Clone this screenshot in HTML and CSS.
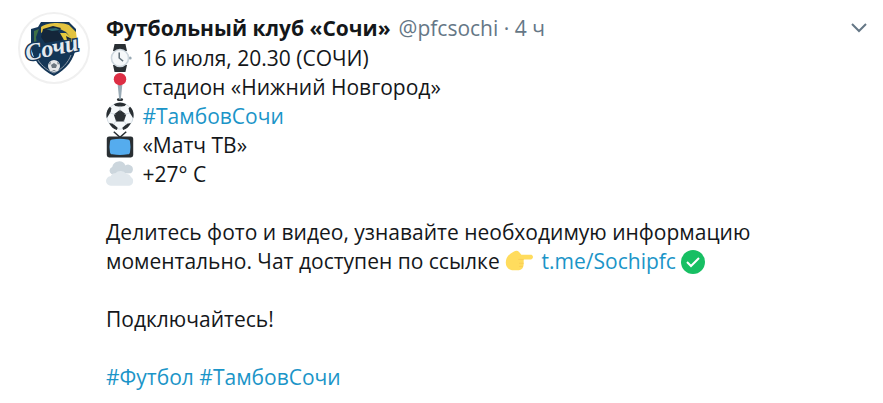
FILE: index.html
```html
<!DOCTYPE html>
<html lang="ru">
<head>
    <meta charset="UTF-8">
    <meta name="viewport" content="width=device-width, initial-scale=1.0">
    <title>Футбольный клуб «Сочи»</title>
    <link rel="stylesheet" href="styles.css">
</head>

<body>
    <article class="tweet">
        <a class="avatar" href="#" aria-label="Футбольный клуб «Сочи»">
            <svg viewBox="0 0 72 72">
                <circle cx="36" cy="36" r="35" fill="#fff" stroke="#f0f0f0" stroke-width="2"/>
                <path d="M13 17L20 15L23 10H51L58 17V34C57 47 48 58 36 64C23 58 14 47 13 34Z" fill="#143657"/>
                <path d="M16 19L21 17L18 25L19 34H16Z" fill="#3f7046"/>
                <path d="M23 15C29 10 45 10 51 13L58 20L59 28L53 26L48 20L40 16H30L23 21Z" fill="#e2c340"/>
                <path d="M25 17L35 14L43 16L40 20L47 24L44 28L27 31L23 25Z" fill="#14263a"/>
                <path d="M28 17L38 16L42 18L34 19Z" fill="#2d6a72"/>
                <path d="M42 21L48 21L56 28L52 31L46 28Z" fill="#e4c93d"/>
                <path d="M48 24L54 27L49 28Z" fill="#14263a"/>
                <path d="M18 45C22 52 28 58 36 61C44 57 50 51 53 43" fill="none" stroke="#8d9aa8" stroke-width="1"/>
                <text class="logo-text" x="9" y="49" transform="rotate(-12 9 49)">Сочи</text>
                <circle cx="36" cy="54" r="6" fill="#e6e8ea"/>
                <path d="M36 51L39 53L38 56H34L33 53ZM31 51L33 50L32 53ZM41 51L39 50L40 53ZM34 59L36 58L38 59Z" fill="#6c7780"/>
            </svg>
        </a>
        <div class="content">
            <header class="tweet-header">
                <a class="name" href="#">Футбольный клуб «Сочи»</a>
                <span class="meta">@pfcsochi · 4 ч</span>
                <button class="more" type="button" aria-label="Ещё">
                    <svg viewBox="0 0 16 10"><path d="M1 1L8 8L15 1" fill="none" stroke="#657786" stroke-width="2"/></svg>
                </button>
            </header>
            <div class="text">
                <p>
                    <svg class="emoji" viewBox="0 0 36 36">
                        <path d="M11 0H25L27 9H9ZM9 27H27L25 36H11Z" fill="#292f33"/>
                        <circle cx="31" cy="18" r="2" fill="#99aab5"/>
                        <circle cx="18" cy="18" r="12" fill="#ccd6dd"/>
                        <circle cx="18" cy="18" r="10" fill="#f5f8fa"/>
                        <path d="M17 11V18L22 22" fill="none" stroke="#66757f" stroke-width="2"/>
                    </svg>
                    16 июля, 20.30 (СОЧИ)
                </p>
                <p>
                    <svg class="emoji" viewBox="0 0 36 36">
                        <ellipse cx="18" cy="34" rx="4" ry="2" fill="#292f33"/>
                        <path d="M15 15H21L19 34H17Z" fill="#99aab5"/>
                        <circle cx="18" cy="8" r="8" fill="#dd2e44"/>
                    </svg>
                    стадион «Нижний Новгород»
                </p>
                <p>
                    <svg class="emoji" viewBox="0 0 36 36">
                        <circle cx="18" cy="18" r="17" fill="#f5f8fa" stroke="#ccd6dd"/>
                        <path d="M18 10L26 16L23 25H13L10 16ZM10 3Q18 -2 26 3L24 5L18 6L12 5ZM1 21Q-1 12 5 6L7 8L6 13ZM35 21Q37 12 31 6L29 8L30 13ZM4 27L9 28L15 33L14 36Q7 34 4 27ZM32 27L27 28L21 33L22 36Q29 34 32 27Z" fill="#292f33"/>
                        <path d="M18 5V12M5 14L12 16M31 14L24 16M13 24L10 29M23 24L26 29" stroke="#ccd6dd"/>
                    </svg>
                    <a href="#">#ТамбовСочи</a>
                </p>
                <p>
                    <svg class="emoji" viewBox="0 0 36 36">
                        <path d="M10 1L18 8L26 1" fill="none" stroke="#292f33" stroke-width="2"/>
                        <rect x="1" y="7" width="34" height="27" rx="3" fill="#292f33"/>
                        <path d="M8 11Q18 9 28 11Q31 11 31 15Q32 20 31 26Q31 30 28 30Q18 32 8 30Q5 30 5 26Q4 20 5 15Q5 11 8 11Z" fill="#55acee"/>
                    </svg>
                    «Матч ТВ»
                </p>
                <p>
                    <svg class="emoji" viewBox="0 0 36 36">
                        <path d="M7 18A5 5 0 0 1 8 9A9 9 0 0 1 25 7A6 6 0 0 1 32 17Z" fill="#ccd6dd"/>
                        <path d="M6 33A6 6 0 0 1 6 21A6 6 0 0 1 12 17A9 9 0 0 1 26 18A6 6 0 0 1 32 22A6 6 0 0 1 30 33Z" fill="#e1e8ed"/>
                    </svg>
                    +27° C
                </p>
                <p class="block">
                    Делитесь фото и видео, узнавайте необходимую информацию моментально. Чат доступен по ссылке
                    <svg class="emoji" viewBox="0 0 36 36">
                        <path d="M11 6C17 3 18 7 21 10H33C37 10 37 16 33 16H24V22Q24 29 18 30H9Q1 28 1 20Q1 11 11 6Z" fill="#ffdc5d"/>
                        <path d="M17 16H24M18 21H24M18 25H23" stroke="#f9ca55"/>
                    </svg>
                    <a href="#">t.me/Sochipfc</a>
                    <svg class="check" viewBox="0 0 24 24">
                        <circle cx="12" cy="12" r="12" fill="#17bf63"/>
                        <path d="M6 12L10 16L18 8" fill="none" stroke="#fff" stroke-width="2"/>
                    </svg>
                </p>
                <p class="block">Подключайтесь!</p>
                <p class="block"><a href="#">#Футбол</a> <a href="#">#ТамбовСочи</a></p>
            </div>
        </div>
    </article>
</body>
</html>
```

FILE: styles.css
```css
body {
    margin: 0;
    background-color: #fff;
    color: #14171a;
    font-family: "Open Sans", "Noto Sans", sans-serif;
    font-size: 21px;
    line-height: 29px;
}

a {
    color: #1b95c8;
    text-decoration: none;
}

/* Tweet */
.tweet {
    display: flex;
    gap: 16px;
    padding: 12px 16px 0 18px;
}

.avatar {
    flex: none;
    width: 72px;
    height: 72px;
}

.avatar svg {
    display: block;
}

.logo-text {
    font-family: "Liberation Serif", serif;
    font-size: 24px;
    font-style: italic;
    font-weight: bold;
    fill: #e4eaf0;
    stroke: #143657;
    stroke-width: 3px;
    paint-order: stroke;
}

.content {
    flex: 1;
    min-width: 0;
}

/* Header */
.tweet-header {
    display: flex;
    align-items: center;
    gap: 8px;
    height: 32px;
}

.name {
    color: #14171a;
    font-weight: bold;
}

.meta {
    color: #657786;
}

.more {
    display: flex;
    margin-left: auto;
    padding: 0;
    border: none;
    background: none;
    cursor: pointer;
}

.more svg {
    width: 16px;
    height: 10px;
}

/* Text */
.text p {
    margin: 0;
}

.text .block {
    max-width: 660px;
    margin-top: 29px;
}

.emoji {
    width: 28px;
    height: 28px;
    margin-right: 3px;
    vertical-align: -6px;
}

.check {
    width: 24px;
    height: 24px;
    vertical-align: -5px;
}
```
